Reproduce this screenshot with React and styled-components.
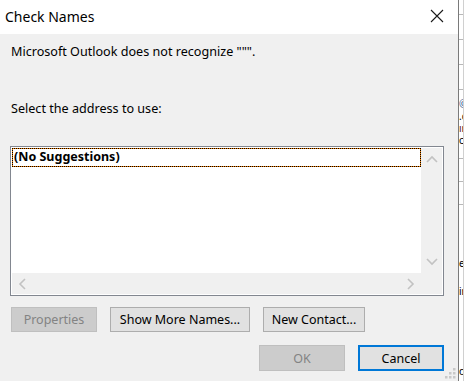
import styled, { createGlobalStyle } from 'styled-components'

const GlobalStyle = createGlobalStyle`
  html, body {
    margin: 0;
    padding: 0;
    background: #ffffff;
  }
  body {
    font-family: "Segoe UI", "Noto Sans", "Open Sans", sans-serif;
  }
`

function CloseIcon() {
  return (
    <svg width="14" height="14" viewBox="0 0 14 14">
      <path d="M1 1 L13 13 M13 1 L1 13" stroke="#1a1a1a" strokeWidth="1.1" fill="none" />
    </svg>
  )
}

function Chevron({ dir }) {
  const paths = {
    up: 'M1 7 L6 2 L11 7',
    down: 'M1 2 L6 7 L11 2',
    left: 'M7 1 L2 6 L7 11',
    right: 'M2 1 L7 6 L2 11',
  }
  const vertical = dir === 'up' || dir === 'down'
  return (
    <svg width={vertical ? 12 : 9} height={vertical ? 9 : 12} viewBox={vertical ? '0 0 12 9' : '0 0 9 12'}>
      <path d={paths[dir]} stroke="#c2c2c2" strokeWidth="1.6" fill="none" />
    </svg>
  )
}

function Grip() {
  const dots = [[8, 0], [4, 4], [8, 4], [0, 8], [4, 8], [8, 8]]
  return (
    <GripBox>
      <svg width="11" height="11" viewBox="0 0 11 11">
        {dots.map(([x, y]) => (
          <rect key={`${x}-${y}`} x={x} y={y} width="2.5" height="2.5" fill="#c8c8c8" />
        ))}
      </svg>
    </GripBox>
  )
}

function ListBox() {
  return (
    <ListFrame>
      <ListContent>
        <ListItem>(No Suggestions)</ListItem>
      </ListContent>
      <VScroll>
        <Chevron dir="up" />
        <Chevron dir="down" />
      </VScroll>
      <HScroll>
        <Chevron dir="left" />
        <Chevron dir="right" />
      </HScroll>
    </ListFrame>
  )
}

// bit of the window sitting behind the dialog
function BackWindow() {
  return (
    <Strip>
      <StripLine $h={14} />
      <StripLine $h={24} />
      <StripLine $h={24} />
      <StripLine $h={24} />
      <StripSpacer $h={8} />
      <StripText $color="#1f4e8c">©</StripText>
      <StripText>.c</StripText>
      <StripText $color="#5a1a1a">ır</StripText>
      <StripText>ca</StripText>
      <StripLine $h={12} />
      <StripLine $h={22} />
      <StripLine $h={22} />
      <StripSpacer $h={52} />
      <StripText>e</StripText>
      <StripSpacer $h={16} />
      <StripText>ir</StripText>
      <StripSpacer $h={68} />
      <StripText>or</StripText>
    </Strip>
  )
}

export default function App() {
  return (
    <>
      <GlobalStyle />
      <Screen>
        <Dialog>
          <TitleBar>
            <Title>Check Names</Title>
            <CloseButton>
              <CloseIcon />
            </CloseButton>
          </TitleBar>
          <Body>
            <Message>Microsoft Outlook does not recognize """.</Message>
            <Label>Select the address to use:</Label>
            <ListBox />
            <ButtonRow>
              <Button $w={86} disabled>Properties</Button>
              <Button $w={140}>Show More Names...</Button>
              <Button $w={102}>New Contact...</Button>
            </ButtonRow>
            <ActionRow>
              <Button $w={86} $h={26} disabled>OK</Button>
              <Button $w={86} $h={26} $default>Cancel</Button>
            </ActionRow>
            <Grip />
          </Body>
        </Dialog>
        <BackWindow />
      </Screen>
    </>
  )
}

const Screen = styled.div`
  width: 464px;
  height: 381px;
  display: flex;
  overflow: hidden;
`

const Dialog = styled.div`
  width: 458px;
  height: 381px;
  display: flex;
  flex-direction: column;
  flex-shrink: 0;
`

const TitleBar = styled.div`
  height: 34px;
  background: #ffffff;
  display: flex;
  align-items: center;
  justify-content: space-between;
  padding: 0 14px 0 5px;
`

const Title = styled.div`
  font-size: 14px;
  color: #000;
  margin-top: -2px;
`

const CloseButton = styled.div`
  display: flex;
  align-items: center;
  margin-top: -3px;
`

const Body = styled.div`
  position: relative;
  flex: 1;
  background: #f0f0f0;
  padding: 9px 14px 0 10px;
  display: flex;
  flex-direction: column;
`

const Message = styled.div`
  font-size: 12.6px;
  line-height: 18px;
  color: #000;
  padding-left: 1px;
`

const Label = styled.div`
  font-size: 12.6px;
  line-height: 18px;
  color: #000;
  padding-left: 1px;
  margin-top: 39px;
`

const ListFrame = styled.div`
  margin-top: 28px;
  width: 434px;
  height: 150px;
  box-sizing: border-box;
  border: 1px solid #828790;
  padding: 1px;
  background: #ffffff;
  display: grid;
  grid-template-columns: 1fr 21px;
  grid-template-rows: 1fr 21px;
`

const ListContent = styled.div`
  background: #ffffff;
`

const ListItem = styled.div`
  height: 19px;
  box-sizing: border-box;
  border: 1px dotted #000;
  background: linear-gradient(#fff, #fff) padding-box, #f07d00 border-box;
  font-size: 12.5px;
  font-weight: bold;
  line-height: 16px;
  padding-left: 1px;
  color: #000;
`

const VScroll = styled.div`
  background: #f0f0f0;
  display: flex;
  flex-direction: column;
  justify-content: space-between;
  align-items: center;
  padding: 7px 0 7px 1px;
`

const HScroll = styled.div`
  grid-column: 1 / 3;
  background: #f0f0f0;
  display: flex;
  justify-content: space-between;
  align-items: center;
  padding: 0 27px 0 6px;
`

const ButtonRow = styled.div`
  display: flex;
  gap: 13px;
  margin-top: 11px;
  padding-left: 1px;
`

const ActionRow = styled.div`
  display: flex;
  gap: 13px;
  justify-content: flex-end;
  margin-top: 13px;
`

const Button = styled.button`
  width: ${(p) => p.$w}px;
  height: ${(p) => p.$h || 25}px;
  box-sizing: border-box;
  padding: 0;
  font-family: inherit;
  font-size: 12.5px;
  color: ${(p) => (p.disabled ? '#838383' : '#000')};
  background: ${(p) => (p.disabled ? '#cccccc' : '#e1e1e1')};
  border: ${(p) => (p.$default ? '2px solid #0078d7' : p.disabled ? '1px solid #bfbfbf' : '1px solid #adadad')};
  border-radius: 0;
`

const GripBox = styled.div`
  position: absolute;
  right: 2px;
  bottom: 2px;
  line-height: 0;
`

const Strip = styled.div`
  flex: 1;
  background: #ffffff;
  border-left: 1px solid #7a7a7a;
  border-right: 1px solid #d0d0d0;
  display: flex;
  flex-direction: column;
  overflow: hidden;
`

const StripLine = styled.div`
  height: ${(p) => p.$h}px;
  border-bottom: 1px solid #b8b8b8;
  flex-shrink: 0;
`

const StripSpacer = styled.div`
  height: ${(p) => p.$h}px;
  flex-shrink: 0;
`

const StripText = styled.div`
  font-size: 10px;
  line-height: 12px;
  color: ${(p) => p.$color || '#000'};
  white-space: nowrap;
  flex-shrink: 0;
`
